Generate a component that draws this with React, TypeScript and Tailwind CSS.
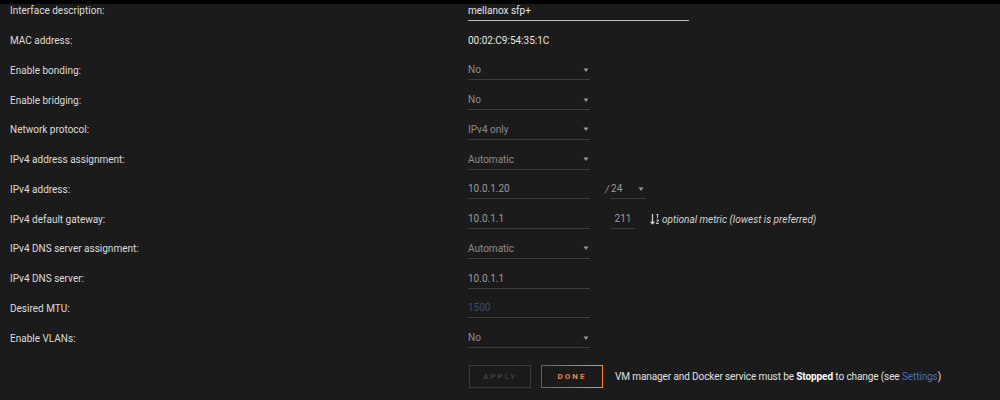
import React from "react";

const Arrow = () => (
  <svg width="6" height="6" viewBox="0 0 6 6" className="shrink-0">
    <path d="M0.5 1.5 H5.5 L3 5 Z" fill="#9a9a9a" />
  </svg>
);

const Label = ({ children }: { children: React.ReactNode }) => (
  <div className="w-[468px] shrink-0 pl-[10px] text-[10px] text-[#dcdcdc]">{children}</div>
);

const Row = ({ label, children }: { label: string; children?: React.ReactNode }) => (
  <div className="flex h-[29.75px] items-center">
    <Label>{label}</Label>
    <div className="flex items-center">{children}</div>
  </div>
);

const Select = ({ value }: { value: string }) => (
  <div className="relative flex h-[20px] w-[122px] items-center justify-between border-b border-[#3d3d3d] pr-[1px] text-[10px] text-[#8c8c8c]">
    <span>{value}</span>
    <Arrow />
  </div>
);

const Input = ({ value, color = "#9a9a9a", w = "w-[122px]" }: { value: string; color?: string; w?: string }) => (
  <div className={`flex h-[20px] ${w} items-center border-b border-[#3d3d3d] text-[10px]`} style={{ color }}>
    {value}
  </div>
);

export default function App() {
  return (
    <div
      className="relative h-[400px] w-[1000px] overflow-hidden bg-[#1c1b1b]"
      style={{ fontFamily: "Roboto, 'Open Sans', sans-serif" }}
    >
      <div className="absolute left-0 top-0 z-10 h-[4px] w-full bg-black" />
      <div className="-mt-[4px] flex flex-col">
        <Row label="Interface description:">
          <div className="flex h-[20px] w-[221px] items-center border-b border-[#bdbdbd] text-[10px] text-[#e6e6e6]">
            mellanox sfp+
          </div>
        </Row>
        <Row label="MAC address:">
          <span className="text-[10px] text-[#e6e6e6]">00:02:C9:54:35:1C</span>
        </Row>
        <Row label="Enable bonding:">
          <Select value="No" />
        </Row>
        <Row label="Enable bridging:">
          <Select value="No" />
        </Row>
        <Row label="Network protocol:">
          <Select value="IPv4 only" />
        </Row>
        <Row label="IPv4 address assignment:">
          <Select value="Automatic" />
        </Row>
        <Row label="IPv4 address:">
          <Input value="10.0.1.20" />
          <span className="ml-[15px] mr-[2px] text-[10px] italic text-[#9a9a9a]">/</span>
          <div className="flex h-[20px] w-[35px] items-center justify-between border-b border-[#3d3d3d] pr-[2px] text-[10px] text-[#9a9a9a]">
            <span>24</span>
            <Arrow />
          </div>
        </Row>
        <Row label="IPv4 default gateway:">
          <Input value="10.0.1.1" />
          <div className="ml-[21px] flex h-[20px] w-[24px] items-center justify-center border-b border-[#3d3d3d] text-[10px] text-[#9a9a9a]">
            211
          </div>
          <svg width="10" height="12" viewBox="0 0 10 12" className="ml-[15px]">
            <path d="M2.5 1 V10.5 M0.6 8.6 L2.5 10.8 L4.4 8.6" stroke="#d8d8d8" strokeWidth="1.2" fill="none" />
            <path d="M6.3 1.5 H8.5 M7.5 1.5 V5 M6.3 7 H8.8 L6.3 10.5 H8.8" stroke="#d8d8d8" strokeWidth="0.9" fill="none" />
          </svg>
          <span className="ml-[2px] text-[10px] italic text-[#d4d4d4]">optional metric (lowest is preferred)</span>
        </Row>
        <Row label="IPv4 DNS server assignment:">
          <Select value="Automatic" />
        </Row>
        <Row label="IPv4 DNS server:">
          <Input value="10.0.1.1" />
        </Row>
        <Row label="Desired MTU:">
          <Input value="1500" color="#3d4d6e" />
        </Row>
        <Row label="Enable VLANs:">
          <Select value="No" />
        </Row>
        <div className="mt-[12px] flex items-center pl-[469px]">
          <div className="flex h-[23px] w-[62px] items-center justify-center border border-[#3a3a3a] text-[8px] font-bold tracking-[2px] text-[#3f3f3f]">
            APPLY
          </div>
          <div className="ml-[10px] h-[23px] w-[62px] bg-gradient-to-r from-[#e22828] to-[#ff8c2f] p-[1px]">
            <div className="flex h-full w-full items-center justify-center bg-[#1c1b1b] text-[8px] font-bold tracking-[2px] text-[#e8864a]">
              DONE
            </div>
          </div>
          <span className="ml-[12px] text-[10px] tracking-[-0.1px] text-[#e0e0e0]">
            VM manager and Docker service must be <b className="font-bold text-white">Stopped</b> to change (see{" "}
            <span className="text-[#4b6cb0]">Settings</span>)
          </span>
        </div>
      </div>
    </div>
  );
}
